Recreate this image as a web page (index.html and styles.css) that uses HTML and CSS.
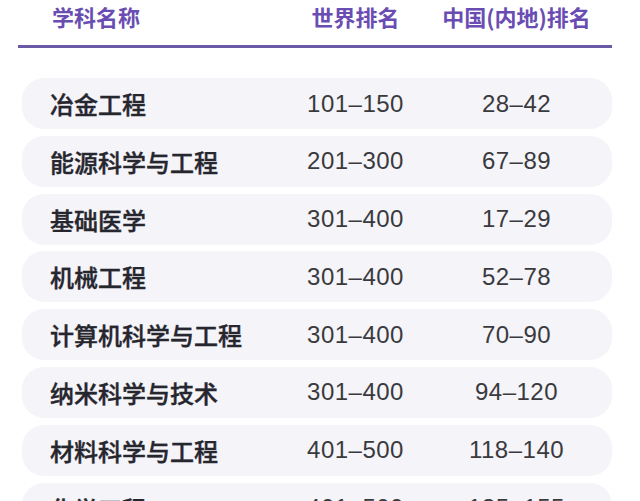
FILE: index.html
```html
<!DOCTYPE html>
<html lang="zh-CN">
<head>
<meta charset="utf-8">
<title>学科排名</title>
<link rel="stylesheet" href="styles.css">
</head>
<body>
<div class="page">
  <div class="head">
    <div class="c-name">学科名称</div>
    <div class="c-num">世界排名</div>
    <div class="c-num">中国(内地)排名</div>
  </div>
  <div class="rows">
    <div class="row"><div class="name">冶金工程</div><div class="num">101–150</div><div class="num">28–42</div></div>
    <div class="row"><div class="name">能源科学与工程</div><div class="num">201–300</div><div class="num">67–89</div></div>
    <div class="row"><div class="name">基础医学</div><div class="num">301–400</div><div class="num">17–29</div></div>
    <div class="row"><div class="name">机械工程</div><div class="num">301–400</div><div class="num">52–78</div></div>
    <div class="row"><div class="name">计算机科学与工程</div><div class="num">301–400</div><div class="num">70–90</div></div>
    <div class="row"><div class="name">纳米科学与技术</div><div class="num">301–400</div><div class="num">94–120</div></div>
    <div class="row"><div class="name">材料科学与工程</div><div class="num">401–500</div><div class="num">118–140</div></div>
    <div class="row"><div class="name">化学工程</div><div class="num">401–500</div><div class="num">135–155</div></div>
  </div>
</div>
</body>
</html>
```

FILE: styles.css
```css
html, body {
  margin: 0;
  padding: 0;
  background: #ffffff;
}
body {
  font-family: "Liberation Sans", "Noto Sans CJK SC", sans-serif;
  width: 640px;
  height: 501px;
  overflow: hidden;
}
.page {
  padding: 0 28px 0 18px;
}
.head {
  display: grid;
  grid-template-columns: 257px 161px 161px;
  align-items: center;
  height: 45px;
  border-bottom: 3px solid #6b59a6;
  color: #6a4db2;
  font-family: "Noto Sans CJK SC", sans-serif;
  font-weight: 700;
  font-size: 22px;
}
.head .c-name {
  padding-left: 34px;
  padding-bottom: 13px;
}
.head .c-num {
  text-align: center;
  padding-bottom: 13px;
}
.rows {
  display: flex;
  flex-direction: column;
  gap: 6.8px;
  padding: 30px 0 0 4px;
}
.row {
  display: grid;
  grid-template-columns: 253px 161px 161px;
  align-items: center;
  height: 51px;
  border-radius: 22px;
  background: #f4f4f9;
}
.name {
  padding-left: 28px;
  font-family: "Noto Sans CJK SC", sans-serif;
  font-weight: 500;
  font-size: 24px;
  color: #26262e;
  -webkit-text-stroke: 0.4px #26262e;
}
.num {
  text-align: center;
  font-size: 24px;
  color: #3a3a3e;
  letter-spacing: 0.5px;
}
```
